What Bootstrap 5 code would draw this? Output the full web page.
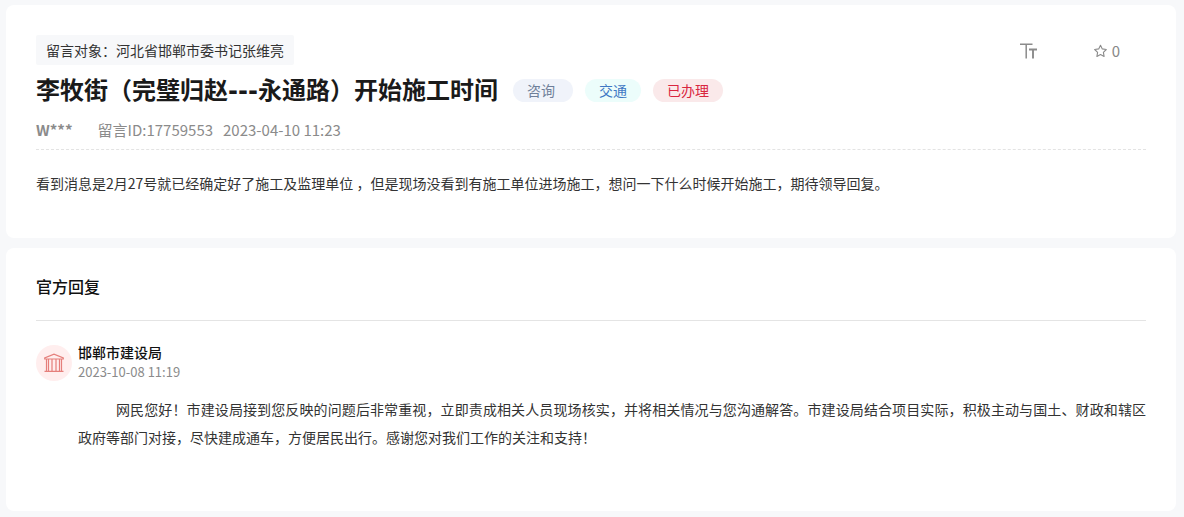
<!DOCTYPE html>
<html lang="zh-CN">
<head>
<meta charset="utf-8">
<meta name="viewport" content="width=device-width, initial-scale=1">
<title>李牧街（完璧归赵---永通路）开始施工时间</title>
<link href="https://cdn.jsdelivr.net/npm/bootstrap@5.3.0/dist/css/bootstrap.min.css" rel="stylesheet">
<style>
  body { background: #f7f8fa; color: #333; font-family: "Noto Sans CJK SC", sans-serif; font-size: 14px; line-height: 28px; }
  .page { padding: 5px 8px 5px 6px; gap: 10px; }
  .panel { background: #fff; border-radius: 8px; padding: 30px; }
  .target { background: #f7f8fa; border-radius: 2px; padding: 0 10px; line-height: 30px; }
  .tools { gap: 56px; padding-right: 26px; }
  .tool { color: #888; font-size: 15px; line-height: 32px; gap: 5px; }
  .topic { font-size: 24px; line-height: 32px; font-weight: 700; color: #1a1a1a; }
  .dash { font-family: "DejaVu Sans", sans-serif; }
  .title-row { gap: 8px 15px; padding-top: 6px; }
  .tags { gap: 12px; }
  .tag { border-radius: 12px; padding: 0 14px; line-height: 23px; }
  .tag-ask { background: #f0f3fa; color: #6f7f99; padding-right: 18px; }
  .tag-area { background: #ecfdfb; color: #3f78c4; }
  .tag-done { background: #fae9ea; color: #d9263f; }
  .meta { font-size: 15px; line-height: 24px; color: #8b8b8b; padding: 11px 0 7px; border-bottom: 1px dashed #e3e3e3; }
  .author { margin-right: 25px; }
  .msg-id { margin-right: 10px; }
  .question { padding: 19px 0 11px; }
  .reply-heading { font-size: 16px; line-height: 16px; font-weight: 500; color: #111; padding-bottom: 26px; border-bottom: 1px solid #e4e4e4; }
  .reply { padding: 21px 0 30px; gap: 6px; }
  .avatar { width: 36px; height: 36px; background: #ffeeee; margin-top: 3px; }
  .agency { font-size: 14px; line-height: 20px; font-weight: 500; color: #111; }
  .when { font-size: 13px; line-height: 20px; color: #8b8b8b; }
  .answer { text-align: justify; text-indent: 38px; padding-top: 13px; }
</style>
</head>
<body>
<main class="page d-flex flex-column">
  <article class="panel">
    <div class="d-flex justify-content-between align-items-start">
      <div class="target">留言对象：河北省邯郸市委书记张维亮</div>
      <div class="tools d-flex align-items-center">
        <button type="button" class="tool btn p-0 border-0 d-flex align-items-center" aria-label="字号">
          <svg width="18" height="32" viewBox="0 0 18 32" fill="none" stroke="#8b8b8b"><path stroke-width="1.5" d="M0 9.200H12.500M6.200 9V23.500"/><path stroke-width="1.900" d="M9 14.500H17M13 14.500V23.500"/></svg>
        </button>
        <button type="button" class="tool btn p-0 border-0 d-flex align-items-center">
          <svg width="13" height="14" viewBox="0 0 13 14" fill="none" stroke="#8b8b8b" stroke-width="1.1" stroke-linejoin="round"><path d="M6.500 1.200 8.300 4.900 12.300 5.500 9.400 8.300 10.100 12.400 6.500 10.500 2.900 12.400 3.600 8.300.7 5.500 4.700 4.900Z"/></svg>
          <span>0</span>
        </button>
      </div>
    </div>
    <div class="title-row d-flex flex-wrap align-items-center">
      <h1 class="topic m-0">李牧街（完璧归赵<span class="dash">---</span>永通路）开始施工时间</h1>
      <div class="tags d-flex">
        <span class="tag tag-ask">咨询</span>
        <span class="tag tag-area">交通</span>
        <span class="tag tag-done">已办理</span>
      </div>
    </div>
    <div class="meta d-flex flex-wrap">
      <b class="author">W***</b>
      <span class="msg-id">留言ID:17759553</span>
      <span>2023-04-10 11:23</span>
    </div>
    <p class="question m-0">看到消息是2月27号就已经确定好了施工及监理单位 ，但是现场没看到有施工单位进场施工，想问一下什么时候开始施工，期待领导回复。</p>
  </article>

  <section class="panel">
    <h2 class="reply-heading m-0">官方回复</h2>
    <div class="reply d-flex align-items-start">
      <div class="avatar rounded-circle flex-shrink-0 d-flex align-items-center justify-content-center">
        <svg width="20" height="20" viewBox="0 0 20 20" fill="none" stroke="#e57f7b" stroke-width="1.200"><path d="M.7 6V5L10 1.200 19.300 5V6ZM.5 18.400H19.500M2.500 6V18M4.500 6V18M8 6V18M12 6V18M15.500 6V18M17.500 6V18"/></svg>
      </div>
      <div class="flex-grow-1">
        <h3 class="agency m-0">邯郸市建设局</h3>
        <div class="when">2023-10-08 11:19</div>
        <p class="answer m-0">网民您好！市建设局接到您反映的问题后非常重视，立即责成相关人员现场核实，并将相关情况与您沟通解答。市建设局结合项目实际，积极主动与国土、财政和辖区政府等部门对接，尽快建成通车，方便居民出行。感谢您对我们工作的关注和支持！</p>
      </div>
    </div>
  </section>
</main>
<script src="https://cdn.jsdelivr.net/npm/bootstrap@5.3.0/dist/js/bootstrap.bundle.min.js"></script>
</body>
</html>
